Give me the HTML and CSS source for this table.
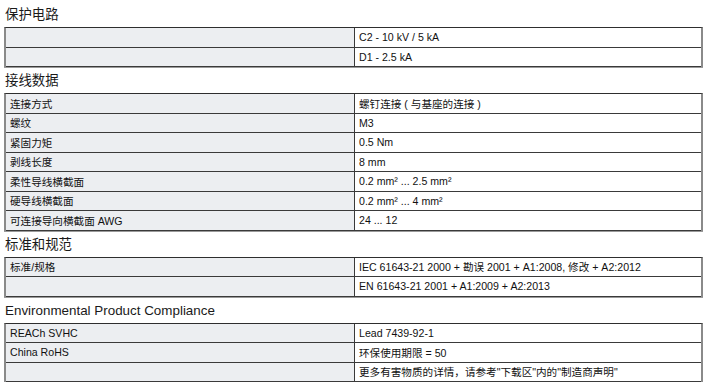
FILE: index.html
```html
<!DOCTYPE html>
<html lang="zh">
<head>
<meta charset="utf-8">
<link rel="stylesheet" href="styles.css">
</head>
<body>
<div class="sheet">
  <h2 class="title first">保护电路</h2>
  <div class="spec">
    <div class="row"><div class="k"></div><div class="v">C2 - 10 kV / 5 kA</div></div>
    <div class="row"><div class="k"></div><div class="v">D1 - 2.5 kA</div></div>
  </div>

  <h2 class="title">接线数据</h2>
  <div class="spec">
    <div class="row"><div class="k">连接方式</div><div class="v">螺钉连接 ( 与基座的连接 )</div></div>
    <div class="row"><div class="k">螺纹</div><div class="v">M3</div></div>
    <div class="row"><div class="k">紧固力矩</div><div class="v">0.5 Nm</div></div>
    <div class="row"><div class="k">剥线长度</div><div class="v">8 mm</div></div>
    <div class="row"><div class="k">柔性导线横截面</div><div class="v">0.2 mm² ... 2.5 mm²</div></div>
    <div class="row"><div class="k">硬导线横截面</div><div class="v">0.2 mm² ... 4 mm²</div></div>
    <div class="row"><div class="k">可连接导向横截面 AWG</div><div class="v">24 ... 12</div></div>
  </div>

  <h2 class="title">标准和规范</h2>
  <div class="spec">
    <div class="row"><div class="k">标准/规格</div><div class="v">IEC 61643-21 2000 + 勘误 2001 + A1:2008, 修改 + A2:2012</div></div>
    <div class="row"><div class="k"></div><div class="v">EN 61643-21 2001 + A1:2009 + A2:2013</div></div>
  </div>

  <h2 class="title">Environmental Product Compliance</h2>
  <div class="spec">
    <div class="row"><div class="k">REACh SVHC</div><div class="v">Lead 7439-92-1</div></div>
    <div class="row"><div class="k">China RoHS</div><div class="v">环保使用期限 = 50</div></div>
    <div class="row"><div class="k"></div><div class="v">更多有害物质的详情，请参考"下载区"内的"制造商声明"</div></div>
  </div>
</div>
</body>
</html>
```

FILE: styles.css
```css
html, body {
  margin: 0;
  padding: 0;
  background: #ffffff;
}

.sheet {
  padding: 0 7px 0 4px;
  font-family: "Liberation Sans", "Noto Sans CJK SC", sans-serif;
  color: #111;
}

.title {
  margin: 6px 0 4px 1px;
  font-size: 13.4px;
  line-height: 16px;
  height: 16px;
  font-weight: normal;
  color: #1a1a1a;
}

.title.first {
  margin-top: 7px;
}

.spec {
  border-top: 1px solid #2e2e2e;
  border-left: 2px solid #8a8a8a;
  border-right: 2px solid #8a8a8a;
  box-shadow: 0 1px 0 #9a9a9a;
}

.row {
  display: grid;
  grid-template-columns: 349px 1fr;
  height: 19.5px;
  box-sizing: border-box;
  border-bottom: 1px solid #3a3a3a;
}

.k,
.v {
  display: flex;
  align-items: center;
  padding: 0 4px;
  font-size: 10.6px;
  white-space: nowrap;
}

.k {
  background: #eceef1;
  border-right: 1px solid #3a3a3a;
}

.v {
  background: #ffffff;
}
```
